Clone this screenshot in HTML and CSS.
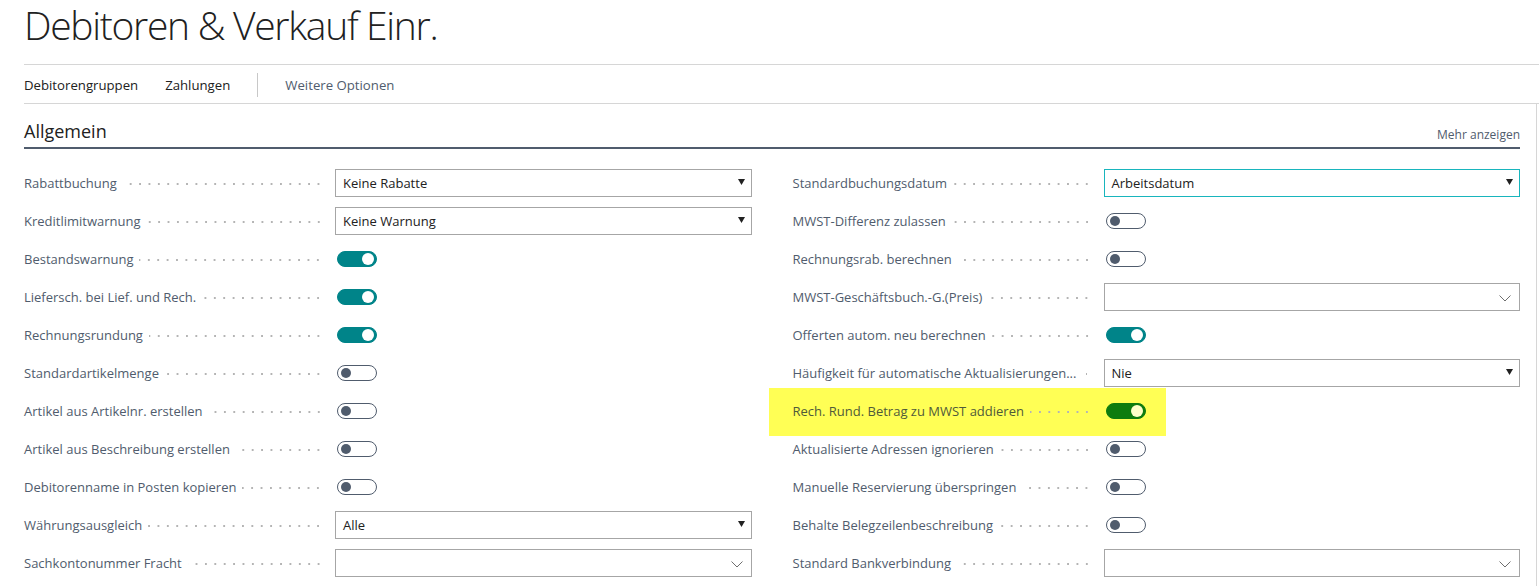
FILE: index.html
```html
<!DOCTYPE html>
<html lang="de">
<head>
    <meta charset="UTF-8">
    <title>Debitoren &amp; Verkauf Einr.</title>
    <link rel="stylesheet" href="styles.css">
</head>
<body>
    <div class="page">
        <h1 class="page-title">Debitoren &amp; Verkauf Einr.</h1>

        <!-- Action bar -->
        <div class="actions">
            <span class="action">Debitorengruppen</span>
            <span class="action">Zahlungen</span>
            <span class="action-sep"></span>
            <span class="action more">Weitere Optionen</span>
        </div>

        <div class="card">
            <div class="section-head">
                <h2>Allgemein</h2>
                <span class="show-more">Mehr anzeigen</span>
            </div>

            <div class="fields">
                <!-- Left column -->
                <div class="col">
                    <div class="row">
                        <div class="caption"><span class="label">Rabattbuchung</span><span class="dots"></span></div>
                        <div class="select"><span>Keine Rabatte</span><svg class="tri" width="7" height="6" viewBox="0 0 7 6"><polygon points="0,0 7,0 3.5,6"/></svg></div>
                    </div>
                    <div class="row">
                        <div class="caption"><span class="label">Kreditlimitwarnung</span><span class="dots"></span></div>
                        <div class="select"><span>Keine Warnung</span><svg class="tri" width="7" height="6" viewBox="0 0 7 6"><polygon points="0,0 7,0 3.5,6"/></svg></div>
                    </div>
                    <div class="row">
                        <div class="caption"><span class="label">Bestandswarnung</span><span class="dots"></span></div>
                        <span class="toggle on"></span>
                    </div>
                    <div class="row">
                        <div class="caption"><span class="label">Liefersch. bei Lief. und Rech.</span><span class="dots"></span></div>
                        <span class="toggle on"></span>
                    </div>
                    <div class="row">
                        <div class="caption"><span class="label">Rechnungsrundung</span><span class="dots"></span></div>
                        <span class="toggle on"></span>
                    </div>
                    <div class="row">
                        <div class="caption"><span class="label">Standardartikelmenge</span><span class="dots"></span></div>
                        <span class="toggle"></span>
                    </div>
                    <div class="row">
                        <div class="caption"><span class="label">Artikel aus Artikelnr. erstellen</span><span class="dots"></span></div>
                        <span class="toggle"></span>
                    </div>
                    <div class="row">
                        <div class="caption"><span class="label">Artikel aus Beschreibung erstellen</span><span class="dots"></span></div>
                        <span class="toggle"></span>
                    </div>
                    <div class="row">
                        <div class="caption"><span class="label">Debitorenname in Posten kopieren</span><span class="dots"></span></div>
                        <span class="toggle"></span>
                    </div>
                    <div class="row">
                        <div class="caption"><span class="label">Währungsausgleich</span><span class="dots"></span></div>
                        <div class="select"><span>Alle</span><svg class="tri" width="7" height="6" viewBox="0 0 7 6"><polygon points="0,0 7,0 3.5,6"/></svg></div>
                    </div>
                    <div class="row">
                        <div class="caption"><span class="label">Sachkontonummer Fracht</span><span class="dots"></span></div>
                        <div class="select lookup"><span></span><svg class="chev" width="12" height="7" viewBox="0 0 12 7"><polyline points="0.5,0.5 6,6 11.5,0.5"/></svg></div>
                    </div>
                </div>

                <!-- Right column -->
                <div class="col">
                    <div class="row">
                        <div class="caption"><span class="label">Standardbuchungsdatum</span><span class="dots"></span></div>
                        <div class="select focused"><span>Arbeitsdatum</span><svg class="tri" width="7" height="6" viewBox="0 0 7 6"><polygon points="0,0 7,0 3.5,6"/></svg></div>
                    </div>
                    <div class="row">
                        <div class="caption"><span class="label">MWST-Differenz zulassen</span><span class="dots"></span></div>
                        <span class="toggle"></span>
                    </div>
                    <div class="row">
                        <div class="caption"><span class="label">Rechnungsrab. berechnen</span><span class="dots"></span></div>
                        <span class="toggle"></span>
                    </div>
                    <div class="row">
                        <div class="caption"><span class="label">MWST-Geschäftsbuch.-G.(Preis)</span><span class="dots"></span></div>
                        <div class="select lookup"><span></span><svg class="chev" width="12" height="7" viewBox="0 0 12 7"><polyline points="0.5,0.5 6,6 11.5,0.5"/></svg></div>
                    </div>
                    <div class="row">
                        <div class="caption"><span class="label">Offerten autom. neu berechnen</span><span class="dots"></span></div>
                        <span class="toggle on"></span>
                    </div>
                    <div class="row">
                        <div class="caption"><span class="label">Häufigkeit für automatische Aktualisierungen...</span><span class="dots short"></span></div>
                        <div class="select"><span>Nie</span><svg class="tri" width="7" height="6" viewBox="0 0 7 6"><polygon points="0,0 7,0 3.5,6"/></svg></div>
                    </div>
                    <div class="row marked">
                        <div class="caption"><span class="label">Rech. Rund. Betrag zu MWST addieren</span><span class="dots"></span></div>
                        <span class="toggle on green"></span>
                    </div>
                    <div class="row">
                        <div class="caption"><span class="label">Aktualisierte Adressen ignorieren</span><span class="dots"></span></div>
                        <span class="toggle"></span>
                    </div>
                    <div class="row">
                        <div class="caption"><span class="label">Manuelle Reservierung überspringen</span><span class="dots"></span></div>
                        <span class="toggle"></span>
                    </div>
                    <div class="row">
                        <div class="caption"><span class="label">Behalte Belegzeilenbeschreibung</span><span class="dots"></span></div>
                        <span class="toggle"></span>
                    </div>
                    <div class="row">
                        <div class="caption"><span class="label">Standard Bankverbindung</span><span class="dots"></span></div>
                        <div class="select lookup"><span></span><svg class="chev" width="12" height="7" viewBox="0 0 12 7"><polyline points="0.5,0.5 6,6 11.5,0.5"/></svg></div>
                    </div>
                </div>
            </div>
        </div>
    </div>
</body>
</html>
```

FILE: styles.css
```css
body {
    margin: 0;
    padding: 0;
    background-color: #fff;
    font-family: 'Open Sans', 'Noto Sans', sans-serif;
    color: #212121;
    overflow: hidden;
}

.page {
    margin-left: 24px;
}

.page-title {
    margin: 0;
    height: 64px;
    box-sizing: border-box;
    padding-top: 1px;
    font-size: 39px;
    line-height: 48px;
    font-weight: 300;
    color: #212121;
    letter-spacing: -1.3px;
    white-space: nowrap;
}

/* Action bar */
.actions {
    display: flex;
    align-items: center;
    gap: 27px;
    height: 40px;
    box-sizing: border-box;
    padding-top: 2px;
    border-top: 1px solid #d6d6d6;
    border-bottom: 1px solid #d6d6d6;
    font-size: 13.2px;
}

.action-sep {
    width: 1px;
    height: 24px;
    background-color: #c8c8c8;
}

.action.more {
    color: #505c6d;
}

/* Card */
.card {
    border-right: 1px solid #d6d6d6;
    margin-right: 2px;
    padding-right: 16px;
    height: 500px;
}

.section-head {
    display: flex;
    justify-content: space-between;
    align-items: flex-end;
    height: 45px;
    box-sizing: border-box;
    padding-bottom: 4px;
    border-bottom: 2px solid #505c6d;
}

.section-head h2 {
    margin: 0;
    font-size: 18px;
    line-height: 24px;
    font-weight: 500;
    color: #212121;
}

.show-more {
    font-size: 12px;
    line-height: 16px;
    color: #505c6d;
}

.fields {
    display: grid;
    grid-template-columns: 1fr 1fr;
    column-gap: 41px;
    margin-top: 15px;
}

.row {
    display: flex;
    align-items: center;
    height: 38px;
}

.caption {
    flex: 0 0 311px;
    display: flex;
    align-items: center;
    box-sizing: border-box;
    padding-right: 12px;
    min-width: 0;
}

.label {
    font-size: 13px;
    color: #505c6d;
    white-space: nowrap;
}

.dots {
    flex: 1 0 20px;
    height: 2px;
    margin-left: 6px;
    margin-top: 1px;
    background-image: radial-gradient(circle, #b4b4b4 0.7px, transparent 0.9px);
    background-size: 9.4px 2px;
    background-position: right center;
    background-repeat: repeat-x;
}

.dots.short {
    flex-basis: 0;
    min-width: 0;
    flex-shrink: 1;
}

/* Inputs */
.select {
    flex: 1;
    height: 28px;
    box-sizing: border-box;
    border: 1px solid #a6a6a6;
    display: flex;
    align-items: center;
    justify-content: space-between;
    padding: 0 6px 0 7px;
    font-size: 13px;
    color: #212121;
}

.select.focused {
    border-color: #18b5bd;
}

.select.lookup {
    padding-right: 8px;
}

.tri {
    fill: #212121;
    margin-top: -3px;
}

.chev {
    fill: none;
    stroke: #6e6e6e;
    stroke-width: 1;
    margin-top: 2px;
}

.toggle {
    position: relative;
    width: 40px;
    height: 16px;
    margin-left: 2px;
    box-sizing: border-box;
    border: 1px solid #505c6d;
    border-radius: 8px;
    background-color: #fff;
}

.toggle::after {
    content: '';
    position: absolute;
    left: 3px;
    top: 2px;
    width: 10px;
    height: 10px;
    border-radius: 50%;
    background-color: #505c6d;
}

.toggle.on {
    border-color: #008489;
    background-color: #008489;
}

.toggle.on::after {
    left: auto;
    right: 2px;
    top: 1px;
    width: 12px;
    height: 12px;
    background-color: #fff;
}

.toggle.green {
    border-color: #0e7c0e;
    background-color: #0e7c0e;
}

.toggle.green::after {
    background-color: #ffffc8;
}

/* Yellow highlight annotation */
.row.marked {
    position: relative;
    isolation: isolate;
}

.row.marked::before {
    content: '';
    position: absolute;
    left: -24px;
    top: -4px;
    width: 397px;
    bottom: -6px;
    background-color: #ffff55;
    z-index: -1;
}

.row.marked .label {
    color: #4f5a3a;
}
```
